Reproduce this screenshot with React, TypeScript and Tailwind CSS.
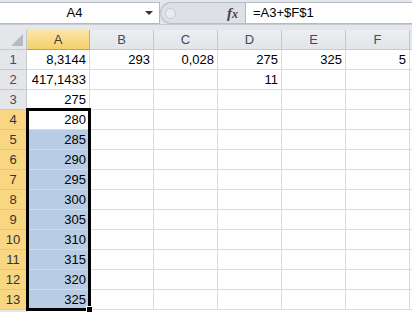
import React from "react";

const cols = ["A", "B", "C", "D", "E", "F"];
const data: Record<number, string[]> = {
  1: ["8,3144", "293", "0,028", "275", "325", "5"],
  2: ["417,1433", "", "", "11", "", ""],
  3: ["275", "", "", "", "", ""],
};
for (let r = 4; r <= 13; r++) {
  data[r] = [String(280 + (r - 4) * 5), "", "", "", "", ""];
}

export default function App() {
  const rows = Array.from({ length: 13 }, (_, i) => i + 1);
  return (
    <div
      className="relative w-[412px] h-[312px] overflow-hidden bg-white text-[13px] text-black"
      style={{ fontFamily: '"Liberation Sans", Arial, sans-serif' }}
    >
      {/* Formula bar */}
      <div className="h-[30px] bg-[#e4e7eb] flex flex-col">
        <div className="flex h-[24px] pt-[2px]">
          <div className="w-[160px] h-[22px] bg-white border-t border-r border-b border-[#b4bac2] flex items-center relative">
            <span className="flex-1 text-center pl-[4px] text-[13px] text-black">A4</span>
            <svg width="8" height="5" viewBox="0 0 8 5" className="mr-[6px]">
              <path d="M0 0 L8 0 L4 4 Z" fill="#333" />
            </svg>
          </div>
          <div className="w-[85px] h-[22px] flex items-center">
            <div className="h-[22px] flex-1 rounded-l-full bg-[#dde1e6] border border-r-0 border-[#b8bec6] flex items-center pl-[4px]">
              <div className="w-[11px] h-[11px] rounded-full bg-[#e9ecef] border border-[#c4c9cf]" />
              <div className="flex-1" />
              <span
                className="mr-[7px] text-[15px] leading-none text-[#444] font-bold italic"
                style={{ fontFamily: '"Liberation Serif", "Times New Roman", serif' }}
              >
                f<span className="text-[12px]">x</span>
              </span>
            </div>
          </div>
          <div className="flex-1 h-[22px] bg-white border border-r-0 border-[#b4bac2] flex items-center pl-[7px] text-[13px]">
            =A3+$F$1
          </div>
        </div>
        <div className="h-[1px] bg-[#c6cbd1]" />
        <div className="flex-1 bg-[#e4e7eb]" />
      </div>

      {/* Grid */}
      <div className="grid grid-cols-[27px_63px_64px_64px_64px_64px_64px_1fr]">
        {/* Header row */}
        <div className="h-[20px] bg-[#e4e6e9] border-r border-b border-[#c5c8cc] relative">
          <svg width="12" height="12" viewBox="0 0 12 12" className="absolute right-[3px] bottom-[3px]">
            <path d="M12 0 L12 12 L0 12 Z" fill="#b7bbc1" />
          </svg>
        </div>
        {cols.map((c) =>
          c === "A" ? (
            <div
              key={c}
              className="h-[20px] bg-gradient-to-b from-[#fbe6a8] to-[#f5cf6a] border-r border-b border-r-[#e3a94b] border-b-[#e0973a] flex items-center justify-center text-[#3b3b3b]"
            >
              {c}
            </div>
          ) : (
            <div
              key={c}
              className="h-[20px] bg-gradient-to-b from-[#eceef1] to-[#e2e5e9] border-r border-b border-[#c5c8cc] flex items-center justify-center text-[#3d4d63]"
            >
              {c}
            </div>
          )
        )}
        <div className="h-[20px] bg-[#e4e6e9] border-b border-[#c5c8cc]" />

        {rows.map((r) => {
          const sel = r >= 4;
          const vals = data[r];
          return (
            <React.Fragment key={r}>
              <div
                className={
                  sel
                    ? "h-[20px] bg-[#f8d682] border-r border-b border-r-[#e3a94b] border-b-[#f0c36d] flex items-center justify-center text-[#333]"
                    : "h-[20px] bg-[#e4e6e9] border-r border-b border-[#c5c8cc] flex items-center justify-center text-[#3d4d63]"
                }
              >
                {r}
              </div>
              {vals.map((v, i) => (
                <div
                  key={i}
                  className={
                    "h-[20px] border-r border-b border-[#dadcdd] flex items-center justify-end pr-[3px] " +
                    (i === 0 && r >= 5 ? "bg-[#b8cce4]" : "bg-white")
                  }
                >
                  {v}
                </div>
              ))}
              <div className="h-[20px] border-b border-[#dadcdd] bg-white" />
            </React.Fragment>
          );
        })}
        <div className="h-[10px] bg-[#e4e6e9] border-r border-[#c5c8cc]" />
      </div>

      {/* Selection outline */}
      <div className="absolute left-[26px] top-[108px] w-[65px] h-[203px] border-[3px] border-black pointer-events-none" />
      {/* Fill handle */}
      <div className="absolute left-[86px] top-[306px] w-[7px] h-[7px] bg-black border border-white" />
    </div>
  );
}
